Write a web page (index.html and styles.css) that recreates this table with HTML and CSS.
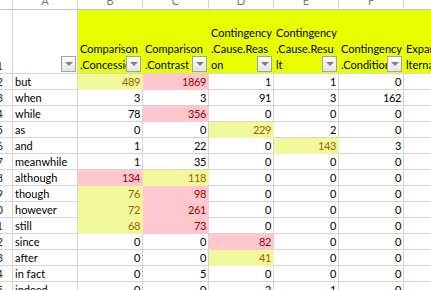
FILE: index.html
```html
<!DOCTYPE html>
<html>
<head>
<meta charset="utf-8">
<link rel="stylesheet" href="styles.css">
</head>
<body>
<div class="sheet">
  <div class="ch rn"></div>
  <div class="ch">A</div>
  <div class="ch">B</div>
  <div class="ch">C</div>
  <div class="ch">D</div>
  <div class="ch">E</div>
  <div class="ch">F</div>
  <div class="ch">G</div>

  <div class="rn">1</div>
  <div class="hd plain"><span class="dd"></span></div>
  <div class="hd"><span>Comparison</span><span>.Concession</span><span class="dd"></span></div>
  <div class="hd"><span>Comparison</span><span>.Contrast</span><span class="dd"></span></div>
  <div class="hd"><span>Contingency</span><span>.Cause.Reas</span><span>on</span><span class="dd"></span></div>
  <div class="hd"><span>Contingency</span><span>.Cause.Resu</span><span>lt</span><span class="dd"></span></div>
  <div class="hd"><span>Contingency</span><span>.Condition</span><span class="dd"></span></div>
  <div class="hd"><span>Expansion.A</span><span>lternative</span></div>

  <div class="rn">2</div><div class="lb">but</div><div class="n y">489</div><div class="n p">1869</div><div class="n">1</div><div class="n">1</div><div class="n">0</div><div></div>
  <div class="rn">3</div><div class="lb">when</div><div class="n">3</div><div class="n">3</div><div class="n">91</div><div class="n">3</div><div class="n">162</div><div></div>
  <div class="rn">4</div><div class="lb">while</div><div class="n">78</div><div class="n p">356</div><div class="n">0</div><div class="n">0</div><div class="n">0</div><div></div>
  <div class="rn">5</div><div class="lb">as</div><div class="n">0</div><div class="n">0</div><div class="n y">229</div><div class="n">2</div><div class="n">0</div><div></div>
  <div class="rn">6</div><div class="lb">and</div><div class="n">1</div><div class="n">22</div><div class="n">0</div><div class="n y">143</div><div class="n">3</div><div></div>
  <div class="rn">7</div><div class="lb">meanwhile</div><div class="n">1</div><div class="n">35</div><div class="n">0</div><div class="n">0</div><div class="n">0</div><div></div>
  <div class="rn">8</div><div class="lb">although</div><div class="n p">134</div><div class="n y">118</div><div class="n">0</div><div class="n">0</div><div class="n">0</div><div></div>
  <div class="rn">9</div><div class="lb">though</div><div class="n y">76</div><div class="n p">98</div><div class="n">0</div><div class="n">0</div><div class="n">0</div><div></div>
  <div class="rn">10</div><div class="lb">however</div><div class="n y">72</div><div class="n p">261</div><div class="n">0</div><div class="n">0</div><div class="n">0</div><div></div>
  <div class="rn">11</div><div class="lb">still</div><div class="n y">68</div><div class="n p">73</div><div class="n">0</div><div class="n">0</div><div class="n">0</div><div></div>
  <div class="rn">12</div><div class="lb">since</div><div class="n">0</div><div class="n">0</div><div class="n p">82</div><div class="n">0</div><div class="n">0</div><div></div>
  <div class="rn">13</div><div class="lb">after</div><div class="n">0</div><div class="n">0</div><div class="n y">41</div><div class="n">0</div><div class="n">0</div><div></div>
  <div class="rn">14</div><div class="lb">in fact</div><div class="n">0</div><div class="n">5</div><div class="n">0</div><div class="n">0</div><div class="n">0</div><div></div>
  <div class="rn">15</div><div class="lb">indeed</div><div class="n">0</div><div class="n">0</div><div class="n">2</div><div class="n">1</div><div class="n">0</div><div></div>
</div>
</body>
</html>
```
FILE: styles.css
```css
html, body {
  margin: 0;
  background: #fff;
}
body {
  width: 431px;
  height: 290px;
  overflow: hidden;
  font-family: Lato, "Open Sans", sans-serif;
  font-size: 11px;
  color: #000;
}
.sheet {
  display: grid;
  grid-template-columns: 13px 65px 65px 66px 65px 65px 65px 80px;
  grid-template-rows: 10px 64px;
  grid-auto-rows: 16px;
}
.sheet > div {
  box-sizing: border-box;
  border-right: 1px solid #d4d4d4;
  border-bottom: 1px solid #d4d4d4;
  overflow: hidden;
  white-space: nowrap;
  position: relative;
  line-height: 15px;
}
.sheet > .ch {
  display: flex;
  justify-content: center;
  align-items: flex-end;
  line-height: 10px;
  padding-bottom: 3px;
  color: #777;
  border-bottom-color: #c4c4c4;
}
.sheet > .rn {
  display: flex;
  justify-content: flex-end;
  align-items: flex-end;
  padding-right: 9px;
  color: #222;
}
.sheet > .hd {
  display: flex;
  flex-direction: column;
  justify-content: flex-end;
  padding: 0 2px;
  line-height: 16px;
  background: #e8ff00;
  border-right-color: #e8ff00;
}
.sheet > .hd.plain {
  background: #fff;
  border-right-color: #d4d4d4;
}
.dd {
  position: absolute;
  right: 1px;
  bottom: 1px;
  width: 15px;
  height: 16px;
  box-sizing: border-box;
  border: 1px solid #a4a4a4;
  background: linear-gradient(#ffffff, #e4e4e4);
  display: flex;
  align-items: center;
  justify-content: center;
}
.dd::after {
  content: "";
  width: 0;
  height: 0;
  border-left: 4px solid transparent;
  border-right: 4px solid transparent;
  border-top: 4px solid #808080;
  margin-top: -1px;
}
.sheet > .lb {
  padding: 0 2px;
}
.sheet > .n {
  text-align: right;
  padding-right: 2px;
  letter-spacing: -0.4px;
}
.sheet > .y {
  background: #f1f79b;
  color: #9c6500;
  border-right-color: #f1f79b;
  border-bottom-color: #f1f79b;
}
.sheet > .p {
  background: #ffc7ce;
  color: #9c0006;
  border-right-color: #ffc7ce;
  border-bottom-color: #ffc7ce;
}
```
